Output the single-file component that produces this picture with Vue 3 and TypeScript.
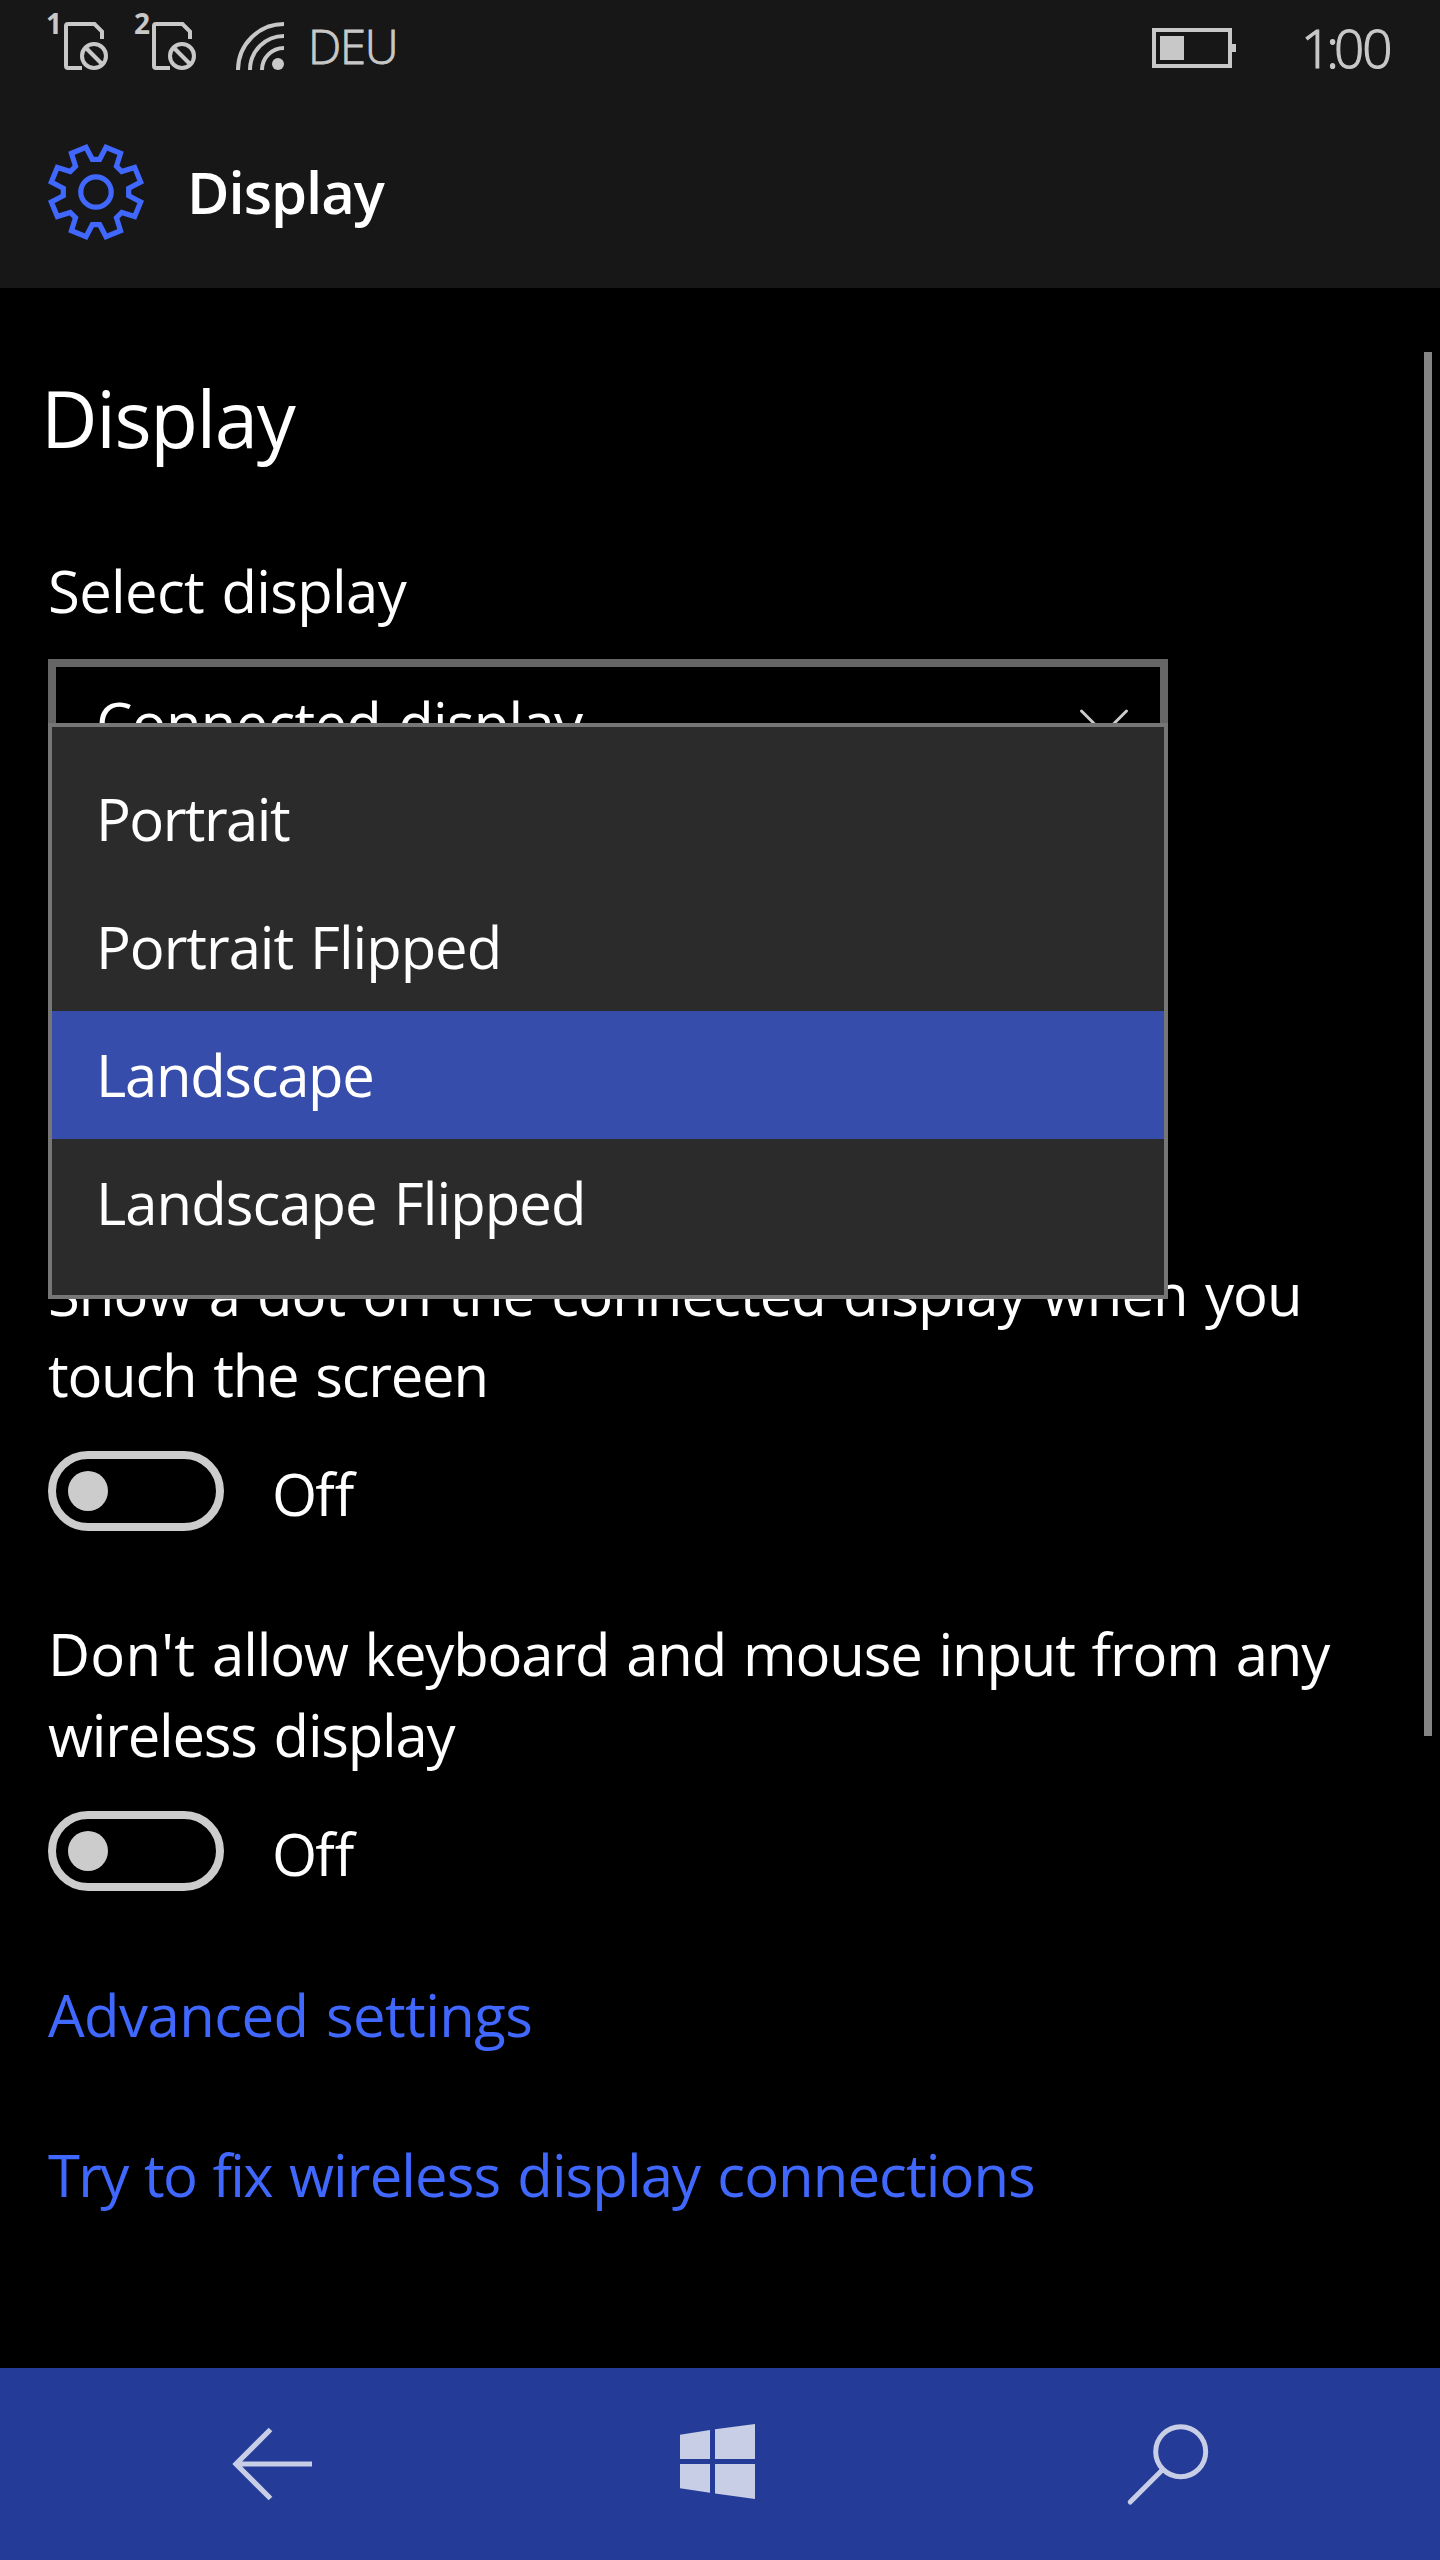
<script setup lang="ts">
interface Orientation { label: string; key: string }
interface Line { key: string; lead?: string; text: string }
interface ToggleSetting { key: string; lines: Line[] }

const orientations: Orientation[] = [
  { label: 'Portrait', key: 'portrait' },
  { label: 'Portrait Flipped', key: 'portrait-flipped' },
  { label: 'Landscape', key: 'landscape' },
  { label: 'Landscape Flipped', key: 'landscape-flipped' },
]
const selected = 'landscape'

const toggles: ToggleSetting[] = [
  { key: 'dot', lines: [
    { key: 'dot-1', text: 'Show a dot on the connected display when you' },
    { key: 'dot-2', text: 'touch the screen' },
  ] },
  { key: 'input', lines: [
    { key: 'input-1', lead: "Don't", text: ' allow keyboard and mouse input from any' },
    { key: 'input-2', text: 'wireless display' },
  ] },
]

// Outline of the eight-toothed cog, as polar points repeated every 45 degrees
const cogPoints = Array.from({ length: 8 }, (_, k) =>
  [[6.5, 32.9], [12.6, 45.8], [32.4, 45.8], [38.5, 32.9]].map(([deg, r]) => {
    const a = ((k * 45 + deg) * Math.PI) / 180
    return `${(r * Math.sin(a)).toFixed(2)},${(-r * Math.cos(a)).toFixed(2)}`
  }).join(' '),
).join(' ')
</script>

<template>
  <div class="phone">
    <header class="top">
      <div class="status">
        <svg v-for="n in 2" :key="n" class="sim" width="64" height="64" viewBox="0 0 64 64">
          <text x="0" y="26" class="sim-no">{{ n }}</text>
          <path d="M36 60H22Q20 60 20 58V18Q20 16 22 16H48.5L56 23.5V31" fill="none" stroke="currentColor" stroke-width="4" />
          <circle cx="48" cy="48" r="12" fill="none" stroke="currentColor" stroke-width="4" />
          <path d="M39.5 39.5L56.5 56.5" stroke="currentColor" stroke-width="4" />
        </svg>
        <svg class="wifi" width="48" height="48" viewBox="0 0 48 48">
          <g fill="none" stroke="currentColor" stroke-width="4">
            <path d="M2 48A46 46 0 0 1 48 2" />
            <path d="M14 48A34 34 0 0 1 48 14" />
            <path d="M26 48A22 22 0 0 1 48 26" />
          </g>
          <circle cx="42" cy="42" r="6" fill="currentColor" />
        </svg>
        <span class="lang">DEU</span>
        <svg class="battery" width="84" height="40" viewBox="0 0 84 40">
          <rect x="2" y="2" width="76" height="36" fill="none" stroke="currentColor" stroke-width="4" />
          <path d="M8 8H32V32H8ZM80 16H84V24H80Z" fill="currentColor" />
        </svg>
        <span class="clock">1<span class="colon">:</span>00</span>
      </div>
      <div class="title">
        <svg width="96" height="96" viewBox="-48 -48 96 96" fill="none" stroke="#4068ff" stroke-width="5.2">
          <polygon :points="cogPoints" />
          <circle r="15.2" />
        </svg>
        <span class="title-text">Display</span>
      </div>
    </header>

    <main class="content">
      <h1>Display</h1>
      <label class="field-label">Select display</label>
      <div class="combo">
        <span>Connected display</span>
        <svg width="56" height="32" viewBox="0 0 56 32">
          <path d="M5.5 5L28 27.5L50.5 5" fill="none" stroke="#ccc" stroke-width="3" stroke-linecap="round" />
        </svg>
      </div>

      <div class="orientation">
        <ul class="menu">
          <li v-for="o in orientations" :key="o.key" :class="[o.key, { on: o.key === selected }]">{{ o.label }}</li>
        </ul>
      </div>

      <section v-for="t in toggles" :key="t.key" class="setting">
        <p><span v-for="l in t.lines" :key="l.key" class="line" :class="l.key"><span v-if="l.lead" class="lead">{{ l.lead }}</span>{{ l.text }}</span></p>
        <div class="switch-row">
          <span class="switch"><span class="knob"></span></span>
          <span class="state">Off</span>
        </div>
      </section>

      <a class="link advanced">Advanced settings</a>
      <a class="link fix"><span class="lead">Try to fix</span> wireless display connections</a>
      <div class="scrollbar"></div>
    </main>

    <nav class="nav">
      <svg width="96" height="96" viewBox="-48 -48 96 96" fill="none" stroke="currentColor" stroke-width="5.2">
        <path d="M-1.5 -34.5L-36 0L-1.5 34.5M-35 0H40" />
      </svg>
      <svg width="96" height="96" viewBox="-48 -48 96 96" fill="currentColor">
        <path d="M-40 -29.3L-10 -34V-5H-40ZM-5 -34.7L35 -40V-5H-5ZM-40 0H-10V28.7L-40 24.3ZM-5 0H35V35L-5 29.4Z" />
      </svg>
      <svg width="96" height="96" viewBox="-48 -48 96 96" fill="none" stroke="currentColor" stroke-width="5">
        <circle cx="12.7" cy="-12.3" r="25" />
        <path d="M-5.5 5.8L-37.8 38" stroke-linecap="round" />
      </svg>
    </nav>
  </div>
</template>

<style>
body {
  background: #000;
}
</style>

<style scoped>
.phone {
  display: flex;
  flex-direction: column;
  width: 1440px;
  height: 2560px;
  background: #000;
  color: #fff;
  font: 400 58px/81px "Open Sans", "Noto Sans", sans-serif;
  word-spacing: 3px;
  white-space: nowrap;
  overflow: hidden;
}
.top {
  height: 288px;
  background: #171717;
}
.status {
  display: flex;
  align-items: flex-start;
  height: 96px;
  padding-left: 46px;
  box-sizing: border-box;
  color: #c8c8c8;
  font-weight: 300;
}
.sim {
  margin: 8px 24px 0 0;
  overflow: visible;
}
.sim-no {
  font: 700 28px "Open Sans", sans-serif;
  fill: currentColor;
}
.wifi {
  margin: 22px 0 0 14px;
}
.lang {
  width: 120px;
  margin: 14px 0 0 24px;
  font-size: 47px;
  line-height: 64px;
  letter-spacing: -1.2px;
  -webkit-text-stroke: 0.9px currentColor;
}
.battery {
  margin: 28px 0 0 724px;
}
.clock {
  margin: 12px 0 0 65px;
  font-size: 53px;
  line-height: 72px;
  letter-spacing: -2px;
  -webkit-text-stroke: 1.2px currentColor;
}
.colon {
  margin: 0 -3px;
}
.title {
  display: flex;
  align-items: center;
  gap: 43px;
  height: 192px;
  padding-left: 48px;
  font-weight: 600;
  letter-spacing: -1px;
}
.title-text {
  padding-bottom: 2px;
}
.content {
  position: relative;
  display: flex;
  flex-direction: column;
  align-items: flex-start;
  height: 2080px;
  padding: 78px 0 0 48px;
  box-sizing: border-box;
}
h1 {
  margin: 0 0 80px -7px;
  font-size: 78px;
  font-weight: 400;
  line-height: 104px;
  letter-spacing: -1.4px;
}
.field-label {
  letter-spacing: -0.66px;
}
.combo {
  display: flex;
  justify-content: space-between;
  width: 1120px;
  height: 128px;
  margin-top: 28px;
  padding: 15px 28px 0 40px;
  box-sizing: border-box;
  border: 8px solid #666;
  letter-spacing: -0.74px;
}
.combo svg {
  margin-top: 24px;
}
.orientation {
  position: relative;
  width: 1120px;
  height: 466px;
}
.menu {
  position: absolute;
  z-index: 1;
  top: -64px;
  left: 0;
  width: 1120px;
  height: 576px;
  margin: 0;
  padding: 28px 0;
  box-sizing: border-box;
  border: 4px solid #767676;
  background: #2b2b2b;
  list-style: none;
}
.menu li {
  height: 128px;
  padding: 23px 0 0 44px;
  box-sizing: border-box;
}
.menu .on {
  background: #364dab;
}
.portrait { letter-spacing: -1.55px; }
.portrait-flipped { letter-spacing: -1.04px; }
.landscape { letter-spacing: -1.3px; }
.landscape-flipped { letter-spacing: -0.95px; }
.setting {
  margin-bottom: 82px;
}
.setting + .setting {
  margin-bottom: 83px;
}
.setting p {
  margin: 0;
}
.line {
  display: block;
}
.dot-1 { letter-spacing: -0.93px; }
.dot-2 { letter-spacing: -1.22px; }
.input-1 { letter-spacing: -1.15px; }
.input-1 .lead { letter-spacing: 0.25px; }
.input-2 { letter-spacing: -1.2px; }
.switch-row {
  display: flex;
  gap: 48px;
  height: 80px;
  margin-top: 36px;
}
.switch {
  display: flex;
  align-items: center;
  width: 176px;
  height: 80px;
  padding-left: 12px;
  box-sizing: border-box;
  border: 8px solid #ccc;
  border-radius: 40px;
}
.knob {
  width: 40px;
  height: 40px;
  border-radius: 50%;
  background: #ccc;
}
.state {
  padding-top: 2px;
  letter-spacing: -1.9px;
  font-feature-settings: "liga" 1;
}
.link {
  color: #4068ff;
}
.advanced {
  margin-bottom: 79px;
  letter-spacing: -0.55px;
}
.fix {
  letter-spacing: -0.91px;
}
.fix .lead {
  letter-spacing: -1.7px;
}
.scrollbar {
  position: absolute;
  top: 64px;
  right: 8px;
  width: 8px;
  height: 1384px;
  background: #848484;
}
.nav {
  display: grid;
  grid-template-columns: repeat(3, 448px);
  place-content: center;
  place-items: center;
  height: 192px;
  background: #243c98;
  color: #c8cee6;
}
</style>
